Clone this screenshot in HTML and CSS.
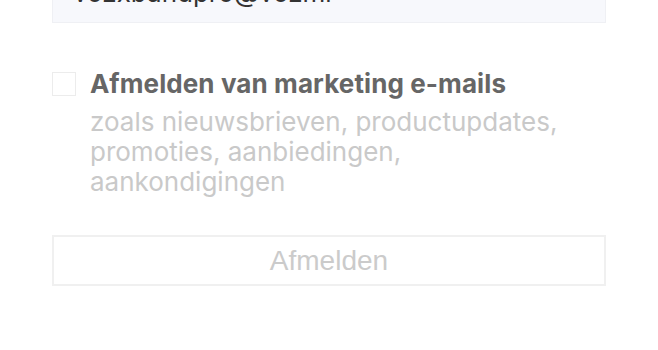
FILE: index.html
```html
<!DOCTYPE html>
<html lang="nl">
<head>
<meta charset="utf-8">
<link rel="stylesheet" href="styles.css">
</head>
<body>
<div class="page">
  <div class="email-input">vozxbandpro@vozmi</div>
  <label class="option">
    <span class="checkbox"></span>
    <span class="option-text">
      <span class="option-title">Afmelden van marketing e-mails</span>
      <span class="option-desc">zoals nieuwsbrieven, productupdates, promoties, aanbiedingen, aankondigingen</span>
    </span>
  </label>
  <button class="submit">Afmelden</button>
</div>
</body>
</html>
```
FILE: styles.css
```css
html, body {
  margin: 0;
  padding: 0;
  background: #ffffff;
}
.page {
  padding: 0 52px;
  font-family: Inter, "Noto Sans", sans-serif;
  display: flex;
  flex-direction: column;
}
.email-input {
  margin-top: -36px;
  height: 59px;
  box-sizing: border-box;
  background: #f7f8fc;
  border: 1px solid #eff0f4;
  padding: 0 20px;
  font-size: 26px;
  line-height: 56px;
  color: #333;
  overflow: hidden;
}
.option {
  display: flex;
  gap: 14px;
  margin-top: 49px;
}
.checkbox {
  flex: none;
  width: 24px;
  height: 24px;
  box-sizing: border-box;
  border: 1px solid #ececec;
  background: #fff;
}
.option-text {
  display: flex;
  flex-direction: column;
  margin-top: -3px;
}
.option-title {
  font-size: 26px;
  font-weight: 700;
  letter-spacing: 0.1px;
  color: #666666;
  line-height: 30px;
}
.option-desc {
  font-size: 26px;
  color: #c9c9c9;
  line-height: 30px;
  margin-top: 8px;
  max-width: 480px;
}
.submit {
  margin-top: 38px;
  height: 51px;
  background: #fff;
  border: 2px solid #f0f0f0;
  font-family: "Liberation Sans", Arial, sans-serif;
  font-size: 28px;
  color: #cbcbcb;
}
```
